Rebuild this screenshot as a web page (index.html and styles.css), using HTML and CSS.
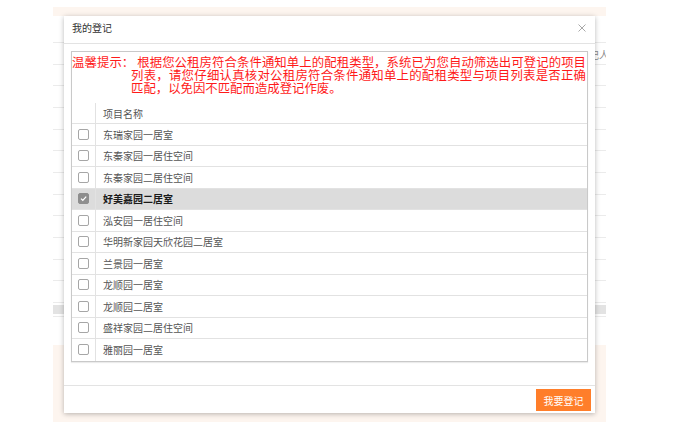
FILE: index.html
```html
<!DOCTYPE html>
<html lang="zh-CN">
<head>
<meta charset="utf-8">
<title>我的登记</title>
<link rel="stylesheet" href="styles.css">
</head>
<body>
<div class="page">
  <div class="sheet">
    <div class="bg-row first"></div>
    <div class="bg-row"><span class="bg-label">记人</span></div>
    <div class="bg-row"></div>
    <div class="bg-row"></div>
    <div class="bg-row"></div>
    <div class="bg-row"></div>
    <div class="bg-row"></div>
    <div class="bg-row"></div>
    <div class="bg-row"></div>
    <div class="bg-row"></div>
    <div class="bg-row"></div>
    <div class="bg-row"></div>
    <div class="bg-row"></div>
    <div class="bg-scroll"></div>
    <div class="bg-line"></div>
  </div>

  <div class="modal">
    <div class="modal-header">
      <span class="modal-title">我的登记</span>
      <svg class="close" width="8" height="8" viewBox="0 0 8 8"><path d="M0.5 0.5L7.5 7.5M7.5 0.5L0.5 7.5" stroke="#a8a8a8" stroke-width="1" fill="none"/></svg>
    </div>
    <div class="modal-body">
      <div class="box">
        <div class="tip"><span class="tip-label">温馨提示：</span> 根据您公租房符合条件通知单上的配租类型，系统已为您自动筛选出可登记的项目列表，请您仔细认真核对公租房符合条件通知单上的配租类型与项目列表是否正确匹配，以免因不匹配而造成登记作废。</div>
        <div class="list">
          <div class="row head"><div class="c-check"></div><div class="c-name">项目名称</div></div>
          <div class="row"><div class="c-check"><span class="cb"></span></div><div class="c-name">东瑞家园一居室</div></div>
          <div class="row"><div class="c-check"><span class="cb"></span></div><div class="c-name">东秦家园一居住空间</div></div>
          <div class="row"><div class="c-check"><span class="cb"></span></div><div class="c-name">东秦家园二居住空间</div></div>
          <div class="row selected"><div class="c-check"><span class="cb checked"><svg width="9" height="9" viewBox="0 0 9 9"><path d="M2 4.6L3.8 6.4L7.2 2.6" stroke="#fff" stroke-width="1.3" fill="none"/></svg></span></div><div class="c-name">好美嘉园二居室</div></div>
          <div class="row"><div class="c-check"><span class="cb"></span></div><div class="c-name">泓安园一居住空间</div></div>
          <div class="row"><div class="c-check"><span class="cb"></span></div><div class="c-name">华明新家园天欣花园二居室</div></div>
          <div class="row"><div class="c-check"><span class="cb"></span></div><div class="c-name">兰景园一居室</div></div>
          <div class="row"><div class="c-check"><span class="cb"></span></div><div class="c-name">龙顺园一居室</div></div>
          <div class="row"><div class="c-check"><span class="cb"></span></div><div class="c-name">龙顺园二居室</div></div>
          <div class="row"><div class="c-check"><span class="cb"></span></div><div class="c-name">盛祥家园二居住空间</div></div>
          <div class="row last"><div class="c-check"><span class="cb"></span></div><div class="c-name">雅丽园一居室</div></div>
        </div>
      </div>
    </div>
    <div class="modal-footer">
      <button class="btn">我要登记</button>
    </div>
  </div>
</div>
</body>
</html>
```

FILE: styles.css
```css
html, body {
  margin: 0;
  padding: 0;
  background: #ffffff;
}

body {
  font-family: "Noto Sans CJK SC", "Noto Sans", sans-serif;
}

.page {
  position: relative;
  width: 553px;
  height: 415px;
  margin: 7px 0 0 53px;
  background: #fdf5ef;
  overflow: hidden;
}

.sheet {
  margin-top: 9px;
  height: 329px;
  background: #ffffff;
}

.bg-row {
  box-sizing: border-box;
  height: 21.67px;
  border-bottom: 1px solid #ebebeb;
  display: flex;
  justify-content: flex-end;
  align-items: flex-end;
}

.bg-row.first {
  height: 27px;
}

.bg-label {
  font-size: 10px;
  line-height: 14px;
  color: #8a8a8a;
  margin-right: -3px;
  padding-bottom: 2px;
}

.bg-scroll {
  margin-top: 2px;
  height: 9px;
  background: #e3e3e3;
}

.bg-line {
  height: 2px;
  border-bottom: 1px solid #ebebeb;
}

.modal {
  position: absolute;
  left: 11px;
  top: 9px;
  width: 531px;
  height: 397px;
  background: #ffffff;
  box-shadow: 0 1px 5px rgba(0, 0, 0, 0.28);
  display: flex;
  flex-direction: column;
}

.modal-header {
  box-sizing: border-box;
  height: 28px;
  flex: none;
  border-bottom: 1px solid #e3e3e3;
  display: flex;
  align-items: center;
  justify-content: space-between;
  padding: 0 9px 3px 8px;
}

.modal-title {
  font-size: 10px;
  color: #333333;
  line-height: 14px;
}

.close {
  display: block;
}

.modal-body {
  flex: 1;
  padding: 7px 7px 0 7px;
}

.box {
  border: 1px solid #c9c9c9;
  box-shadow: 0 1px 1px rgba(0, 0, 0, 0.08);
}

.tip {
  box-sizing: border-box;
  height: 51px;
  padding: 4px 1px 0 59px;
  text-indent: -59px;
  text-align: justify;
  color: #ff1a1a;
  font-size: 12.4px;
  line-height: 13px;
  text-spacing-trim: space-all;
}

.tip-label {
  white-space: nowrap;
}

.list {
  display: flex;
  flex-direction: column;
}

.row {
  box-sizing: border-box;
  height: 21.5px;
  display: flex;
  border-bottom: 1px solid #e2e2e2;
}

.row.head {
  height: 21px;
}

.row.last {
  border-bottom: none;
}

.row.selected {
  background: #dcdcdc;
}

.c-check {
  flex: none;
  width: 23px;
  border-right: 1px solid #e2e2e2;
  display: flex;
  align-items: center;
  justify-content: center;
}

.c-name {
  flex: 1;
  padding-left: 7px;
  display: flex;
  align-items: center;
  font-size: 10px;
  color: #555555;
}

.row.selected .c-name {
  color: #1a1a1a;
  font-weight: 600;
}

.cb {
  box-sizing: border-box;
  width: 11px;
  height: 11px;
  border: 1px solid #a6a6a6;
  border-radius: 2px;
  background: #ffffff;
  display: flex;
  align-items: center;
  justify-content: center;
}

.cb.checked {
  background: #8e8e8e;
  border-color: #8e8e8e;
}

.modal-footer {
  box-sizing: border-box;
  height: 28px;
  flex: none;
  border-top: 1px solid #e3e3e3;
  display: flex;
  justify-content: flex-end;
  padding: 3px 4px 0 0;
}

.btn {
  width: 55px;
  height: 22px;
  border: none;
  margin: 0;
  padding: 0;
  background: #ff7e2a;
  color: #ffffff;
  font-family: "Noto Sans CJK SC", "Noto Sans", sans-serif;
  font-size: 10px;
}
```
